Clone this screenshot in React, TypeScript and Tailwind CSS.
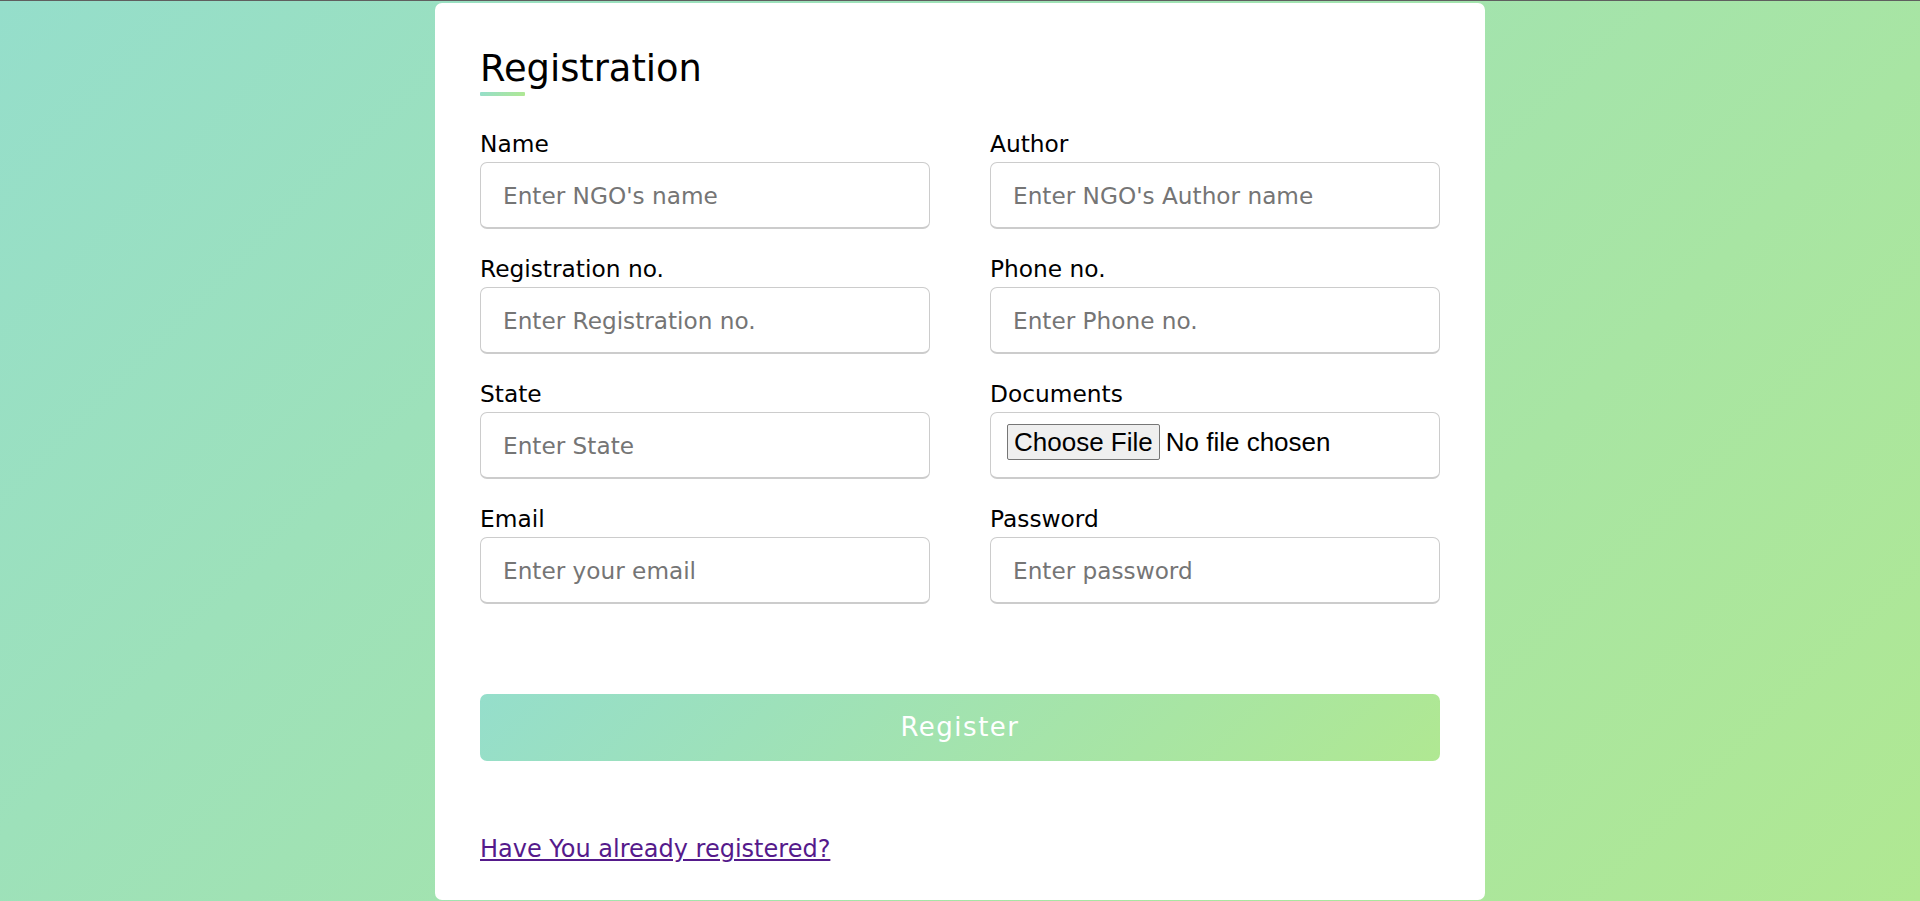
import React from "react";

const fields = [
  [
    { label: "Name", ph: "Enter NGO's name", type: "text" },
    { label: "Author", ph: "Enter NGO's Author name", type: "text" },
  ],
  [
    { label: "Registration no.", ph: "Enter Registration no.", type: "text" },
    { label: "Phone no.", ph: "Enter Phone no.", type: "text" },
  ],
  [
    { label: "State", ph: "Enter State", type: "text" },
    { label: "Documents", ph: "", type: "file" },
  ],
  [
    { label: "Email", ph: "Enter your email", type: "email" },
    { label: "Password", ph: "Enter password", type: "password" },
  ],
];

export default function App() {
  return (
    <div
      className="h-[901px] w-full overflow-hidden border-t border-[#5f5f5f] bg-[linear-gradient(135deg,#95decb,#b0e892)] pt-[2px] flex justify-center"
      style={{ fontFamily: "'DejaVu Sans', Inter, sans-serif" }}
    >
      <div className="h-[897px] w-[1050px] rounded-[7px] bg-white px-[45px] pt-[43px]">
        <div className="text-[36.8px] leading-[45px] text-black">Registration</div>
        <div className="mt-[1px] h-[4px] w-[45px] rounded-[1px] bg-[linear-gradient(135deg,#95decb,#b0e892)]" />
        <form className="mt-[33px]" onSubmit={(e) => e.preventDefault()}>
          <div className="grid grid-cols-2 gap-x-[60px]">
            {fields.flat().map((f) => (
              <div key={f.label} className="mb-[25px]">
                <label className="block text-[23.3px] leading-[30px] text-black mb-[3px]">{f.label}</label>
                {f.type === "file" ? (
                  <div className="flex h-[67px] items-center rounded-[7px] border border-b-2 border-[#cccccc] pl-[16px] pb-[6px]">
                    <input
                      type="file"
                      className="text-[26px] leading-[30px] text-black file:mr-[6px] file:cursor-pointer file:rounded-[2px] file:border file:border-solid file:border-[#767676] file:bg-[#efefef] file:px-[6px] file:py-[2px] file:leading-[30px]"
                      style={{ fontFamily: "'Liberation Sans', Arial, sans-serif" }}
                    />
                  </div>
                ) : (
                  <input
                    type={f.type}
                    placeholder={f.ph}
                    className="block h-[67px] w-full rounded-[7px] border border-b-2 border-[#cccccc] pl-[22px] text-[23.2px] text-black outline-none placeholder:text-[#757575]"
                  />
                )}
              </div>
            ))}
          </div>
          <button
            type="submit"
            className="mt-[65px] block h-[67px] w-full rounded-[7px] bg-[linear-gradient(135deg,#95decb,#b0e892)] text-[26px] tracking-[1.5px] text-white"
          >
            Register
          </button>
        </form>
        <div className="mt-[70px]">
          <a href="#" className="text-[24px] text-[#551a8b] underline">
            Have You already registered?
          </a>
        </div>
      </div>
    </div>
  );
}
